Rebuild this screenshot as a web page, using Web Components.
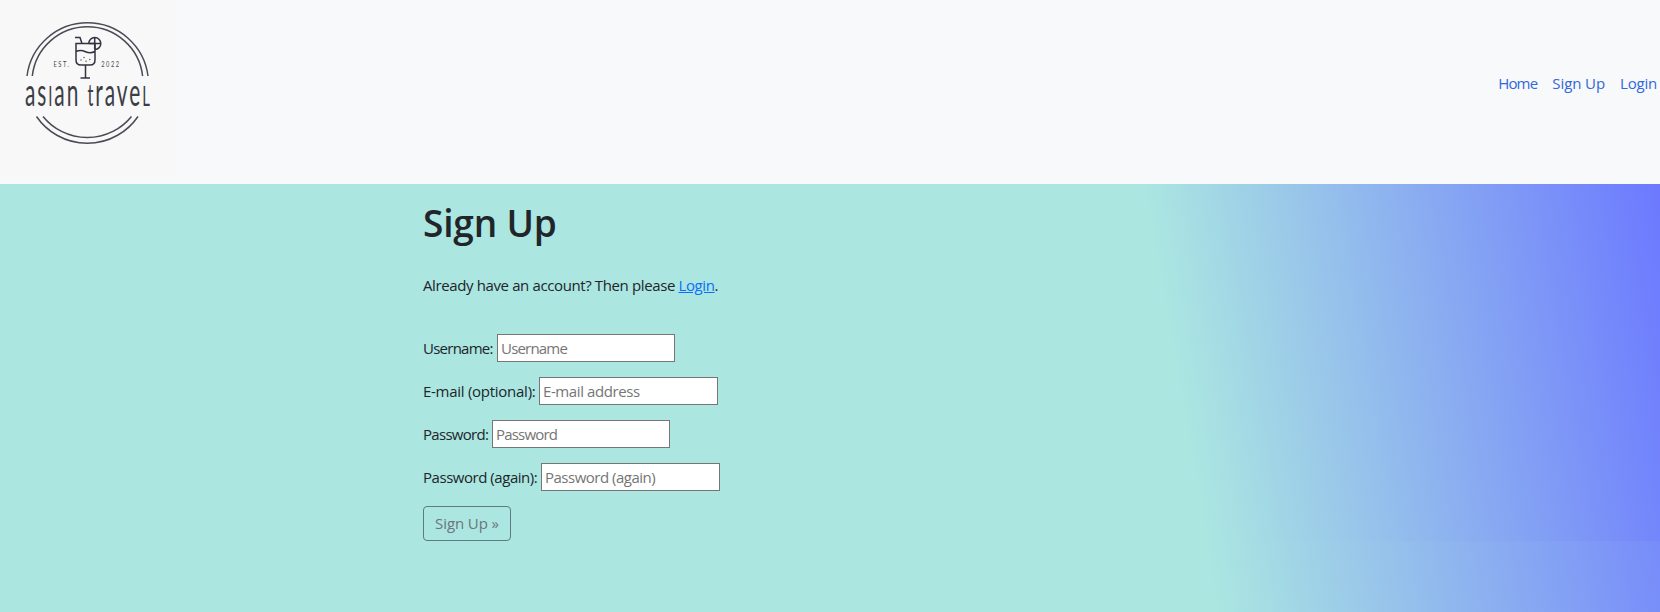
<!DOCTYPE html>
<html lang="en">
<head>
<meta charset="utf-8">
<title>Asian Travel - Sign Up</title>
<style>
html,body{height:100%;margin:0}
body{font:15px/24px "Open Sans","Noto Sans",sans-serif;color:#212529;overflow:hidden;background:linear-gradient(80deg,#abe6e1 70%,#6c79ff) 0 0/100% 1000px}
</style>
</head>
<body>
<travel-page></travel-page>
<script>
const define = (name, html) => customElements.define(name, class extends HTMLElement {
  constructor() {
    super();
    this.attachShadow({mode: 'open'}).innerHTML = html(this);
  }
  connectedCallback() {
    // Condense the wordmark to the width of the badge
    const word = this.shadowRoot.querySelector('.word');
    if (word) word.style.transform = `scaleX(${127 / word.offsetWidth})`;
  }
});

define('travel-logo', () => `
<style>
:host{display:block;position:relative;width:175px;height:175px;background:#f8f8f8}
svg{display:block}
.word{position:absolute;left:25px;top:76px;font:400 38px/30px Lato,sans-serif;letter-spacing:3.500px;color:#3c3d45;white-space:nowrap;transform-origin:0 0}
.word span{font-size:27px;line-height:1;text-transform:uppercase}
.word .t{font-size:30px;text-transform:none}
</style>
<svg width="175" height="175" viewBox="0 0 175 175" fill="none" stroke="#4a4b55" stroke-width="1.5">
  <path d="M27 76A61 61 0 0 1 148 76M32.300 76A55.500 55.500 0 0 1 142.600 76M36.500 116.500A61.500 61.500 0 0 0 138 116.500M43 116.500A57 57 0 0 0 131.500 116.500"/>
  <g stroke-width="1.5" stroke="#32333f">
    <path d="M75 37.500H80L81.800 43M76 43.500H95V60Q95 65 90 65H81Q76 65 76 60ZM76 51.500Q80.500 49.500 85.500 51.700T95 51.500M85.500 65V78M80.500 78H90"/>
    <path d="M88.800 43.500A6 6 0 1 1 95 49.500M88.800 43.500H101M94.700 37.500V49.500"/>
  </g>
  <g fill="#555662" stroke="none"><circle cx="84" cy="57.500" r=".75"/><circle cx="81" cy="60" r=".75"/><circle cx="86" cy="61.300" r=".75"/><circle cx="89.800" cy="59.500" r=".75"/></g>
  <g fill="#44454f" stroke="none" font-family="Lato,sans-serif" font-size="7.500" letter-spacing="2">
    <text transform="translate(53.500 67) scale(.77 1)">EST.</text><text transform="translate(101.300 67) scale(.76 1)">2022</text>
  </g>
</svg>
<div class="word">as<span>i</span>an <span class="t">t</span>rave<span>l</span></div>`);

define('nav-link', () => `
<style>:host{display:block}a{color:#2f68dc;text-decoration:none;white-space:nowrap;letter-spacing:var(--track,0)}</style>
<a href="#"><slot></slot></a>`);

define('site-header', () => `
<style>
:host{display:flex;height:184px;box-sizing:border-box;background:#f8f9fa;justify-content:space-between;padding-right:3px}
nav{display:flex;gap:15px;padding-top:71px}
</style>
<travel-logo></travel-logo>
<nav><slot></slot></nav>`);

define('form-field', el => `
<style>
:host{display:flex;height:28px;align-items:center;margin-bottom:15px}
label{width:${el.getAttribute('label-width')}px;white-space:nowrap;letter-spacing:var(--track,0)}
input{box-sizing:border-box;width:${el.getAttribute('input-width')}px;height:28px;margin:0;padding:1px 3px;border:1px solid #767676;border-radius:0;background:#fff;font:inherit;letter-spacing:var(--hint-track,-.4px)}
input::placeholder{color:#757575;opacity:1}
</style>
<label for="f"><slot></slot></label><input id="f" type="text" placeholder="${el.getAttribute('hint')}">`);

define('outline-button', () => `
<style>
:host{display:block}
button{box-sizing:border-box;width:88px;height:35px;padding:0 0 2px;font:inherit;letter-spacing:-.1px;color:#6c757d;background:transparent;border:1px solid #5e7b80;border-radius:4px}
</style>
<button type="button"><slot></slot></button>`);

define('signup-panel', () => `
<style>
:host{display:block;box-sizing:border-box;height:357px;padding:15px 0 0 423px;background:linear-gradient(80deg,#abe6e1 70%,#6c79ff)}
h1{margin:0;font-size:37px;line-height:48px;font-weight:600;letter-spacing:-.15px}
p{margin:26px 0 36px;line-height:25px;letter-spacing:-.38px}
a{color:#0d6efd}
</style>
<h1>Sign Up</h1>
<p>Already have an account? Then please <a href="#">Login</a>.</p>
<form-field style="--track:-.75px;--hint-track:-.8px" label-width="74" input-width="178" hint="Username">Username:</form-field>
<form-field label-width="116" input-width="179" hint="E-mail address">E-mail (optional):</form-field>
<form-field style="--track:-.7px;--hint-track:-.8px" label-width="69" input-width="178" hint="Password">Password:</form-field>
<form-field style="--track:-.46px;--hint-track:-.5px" label-width="118" input-width="179" hint="Password (again)">Password (again):</form-field>
<outline-button>Sign Up »</outline-button>`);

define('travel-page', () => `
<style>:host{display:block;--track:-.27px}</style>
<site-header><nav-link style="--track:-.8px">Home</nav-link><nav-link style="--track:-.1px">Sign Up</nav-link><nav-link style="--track:-.2px">Login</nav-link></site-header>
<signup-panel></signup-panel>`);
</script>
</body>
</html>
